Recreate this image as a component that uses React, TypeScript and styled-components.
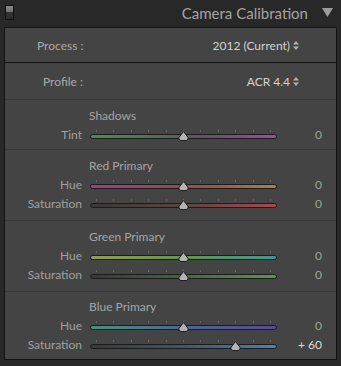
import styled, { createGlobalStyle } from "styled-components";

const GlobalStyle = createGlobalStyle`
  body {
    margin: 0;
    background: #282828;
    font-family: "Lato", "Open Sans", sans-serif;
  }
`;

type SliderDef = {
  label: string;
  track: string;
  value: number;
};

type SectionDef = {
  title: string;
  sliders: SliderDef[];
};

const sections: SectionDef[] = [
  {
    title: "Shadows",
    sliders: [
      {
        label: "Tint",
        track: "linear-gradient(90deg, #4b8f4b, #54665a 45%, #64506a 60%, #a24aa2)",
        value: 0,
      },
    ],
  },
  {
    title: "Red Primary",
    sliders: [
      {
        label: "Hue",
        track: "linear-gradient(90deg, #8a4a7c, #924a5a 45%, #9a5c4a 70%, #a2845a)",
        value: 0,
      },
      {
        label: "Saturation",
        track: "linear-gradient(90deg, #383838, #5e4444 50%, #a84a4a)",
        value: 0,
      },
    ],
  },
  {
    title: "Green Primary",
    sliders: [
      {
        label: "Hue",
        track: "linear-gradient(90deg, #929c56, #629450 50%, #44948f)",
        value: 0,
      },
      {
        label: "Saturation",
        track: "linear-gradient(90deg, #383838, #4a6244 50%, #5a9850)",
        value: 0,
      },
    ],
  },
  {
    title: "Blue Primary",
    sliders: [
      {
        label: "Hue",
        track: "linear-gradient(90deg, #46947a, #486896 50%, #5a489a)",
        value: 0,
      },
      {
        label: "Saturation",
        track: "linear-gradient(90deg, #383838, #445664 50%, #4a84ac)",
        value: 60,
      },
    ],
  },
];

const TICKS = Array.from({ length: 11 }, (_, i) => i);

function UpDown() {
  return (
    <ArrowIcon width="6" height="9" viewBox="0 0 6 9">
      <path d="M3 0 L6 3.5 H0 Z" fill="#b0b0b0" />
      <path d="M3 9 L6 5.5 H0 Z" fill="#b0b0b0" />
    </ArrowIcon>
  );
}

function Slider({ def }: { def: SliderDef }) {
  const frac = (def.value + 100) / 200;
  const text = def.value > 0 ? `+ ${def.value}` : `${def.value}`;
  return (
    <SliderRow>
      <SliderLabel>{def.label}</SliderLabel>
      <TrackWrap>
        <Ticks>
          {TICKS.map((t) => (
            <Tick key={t} />
          ))}
        </Ticks>
        <Track style={{ background: def.track }} />
        <Thumb
          style={{ left: `calc(7px + ${frac} * (100% - 14px))` }}
          width="11"
          height="10"
          viewBox="0 0 11 10"
        >
          <path
            d="M5.5 0.5 L9 5 Q10.5 6.5 10 8 Q9.5 9.5 8 9.5 H3 Q1.5 9.5 1 8 Q0.5 6.5 2 5 Z"
            fill="#b4b4b4"
            stroke="#1e1e1e"
            strokeWidth="1"
          />
        </Thumb>
      </TrackWrap>
      <SliderValue $bright={def.value !== 0}>{text}</SliderValue>
    </SliderRow>
  );
}

export default function App() {
  return (
    <>
      <GlobalStyle />
      <Header>
        <Switch />
        <Title>Camera Calibration</Title>
        <Collapse width="11" height="9" viewBox="0 0 11 9">
          <path d="M0 0 H11 L5.5 9 Z" fill="#9c9c9c" />
        </Collapse>
      </Header>
      <Panel>
        <SelectRow $height={34} $dark>
          <SelectLabel $indent={32}>Process :</SelectLabel>
          <SelectValue>
            2012 (Current) <UpDown />
          </SelectValue>
        </SelectRow>
        <SelectRow $height={36}>
          <SelectLabel $indent={38}>Profile :</SelectLabel>
          <SelectValue>
            ACR 4.4 <UpDown />
          </SelectValue>
        </SelectRow>
        {sections.map((s) => (
          <Section key={s.title} $single={s.sliders.length === 1}>
            <SectionTitle>{s.title}</SectionTitle>
            {s.sliders.map((sl) => (
              <Slider key={sl.label} def={sl} />
            ))}
          </Section>
        ))}
      </Panel>
    </>
  );
}

const Header = styled.div`
  height: 27px;
  display: flex;
  align-items: center;
  padding: 0 8px 0 5px;
  box-sizing: border-box;
`;

const Switch = styled.div`
  width: 7px;
  height: 13px;
  border: 1px solid #101010;
  background: linear-gradient(180deg, #8a8a8a 0, #6e6e6e 50%, #333 50%, #2e2e2e);
  margin-bottom: 2px;
`;

const Title = styled.div`
  margin-left: auto;
  font-size: 15px;
  color: #a4a4a4;
  margin-bottom: 2px;
`;

const Collapse = styled.svg`
  margin-left: 14px;
  margin-bottom: 2px;
`;

const Panel = styled.div`
  margin: 0 4px;
  border: 1px solid #141414;
  background: #444444;
`;

const SelectRow = styled.div<{ $height: number; $dark?: boolean }>`
  height: ${(p) => p.$height}px;
  display: flex;
  align-items: center;
  border-bottom: 1px solid ${(p) => (p.$dark ? "#141414" : "#393939")};
  padding-right: 37px;
  font-size: 12px;
`;

const SelectLabel = styled.div<{ $indent: number }>`
  padding-left: ${(p) => p.$indent}px;
  color: #aaaaaa;
`;

const SelectValue = styled.div`
  margin-left: auto;
  color: #d2d2d2;
  display: flex;
  align-items: center;
  gap: 3px;
`;

const ArrowIcon = styled.svg`
  display: block;
`;

const Section = styled.div<{ $single: boolean }>`
  padding: 8px 0 ${(p) => (p.$single ? 5 : 7)}px;
  border-bottom: 1px solid #393939;
  &:last-child {
    border-bottom: none;
    padding-top: 7px;
    padding-bottom: 5px;
  }
`;

const SectionTitle = styled.div`
  padding-left: 84px;
  height: 16px;
  line-height: 16px;
  margin-bottom: 1px;
  font-size: 12px;
  color: #a4a4a4;
`;

const SliderRow = styled.div`
  display: grid;
  grid-template-columns: 77px 187px 1fr;
  column-gap: 8px;
  align-items: center;
  height: 19px;
  font-size: 12px;
  padding-right: 14px;
`;

const SliderLabel = styled.div`
  text-align: right;
  color: #a0a0a0;
`;

const TrackWrap = styled.div`
  position: relative;
  height: 19px;
`;

const Ticks = styled.div`
  position: absolute;
  left: 6px;
  right: 6px;
  top: 5px;
  display: flex;
  justify-content: space-between;
`;

const Tick = styled.div`
  width: 1px;
  height: 2px;
  background: #666666;
`;

const Track = styled.div`
  position: absolute;
  left: 0;
  right: 0;
  top: 9px;
  height: 3px;
  border: 1px solid #1c1c1c;
  border-radius: 3px;
  box-sizing: content-box;
`;

const Thumb = styled.svg`
  position: absolute;
  top: 6px;
  margin-left: -5.5px;
`;

const SliderValue = styled.div<{ $bright: boolean }>`
  text-align: right;
  color: ${(p) => (p.$bright ? "#dcdcdc" : "#a0a0a0")};
`;
